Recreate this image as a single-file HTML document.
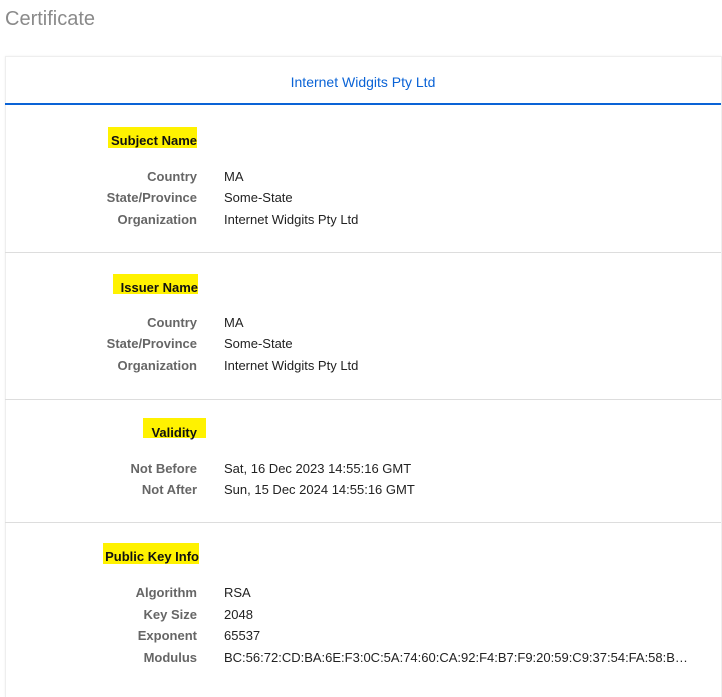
<!DOCTYPE html>
<html><head><style>
body{margin:0;width:722px;height:685px;background:#fff;font-family:"Liberation Sans",sans-serif;position:relative;overflow:hidden;color:#222}
.t{position:absolute;left:5px;top:8px;font-size:20px;font-weight:300;color:#8a8a8a}
.card{position:absolute;left:5px;top:56px;width:715px;height:640px;border:1px solid #eee;border-bottom:none;box-shadow:0 0 3px rgba(0,0,0,.05)}
.tab{position:absolute;left:5px;top:56px;width:716px;height:48px;text-align:center;line-height:52px;color:#0a63d6;font-size:14px}
.bl{position:absolute;left:5px;top:103px;width:716px;height:2px;background:#0a63d6}
.sep{position:absolute;left:5px;width:716px;height:1px;background:#ddd}
.h{position:absolute;background:#fff200;font-weight:bold;font-size:13px;color:#111;line-height:21px;text-align:right;padding-right:0}
.l{position:absolute;right:525px;font-size:13px;font-weight:bold;color:#666;white-space:nowrap}
.v{position:absolute;left:224px;font-size:13px;color:#222;white-space:nowrap}
</style></head><body>
<div class="t">Certificate</div>
<div class="card"></div>
<div class="tab">Internet Widgits Pty Ltd</div>
<div class="bl"></div>

<div class="h" style="left:108px;top:127px;width:89px;height:21px;line-height:28px">Subject Name</div>
<div class="l" style="top:169px">Country</div><div class="v" style="top:169px">MA</div>
<div class="l" style="top:190px">State/Province</div><div class="v" style="top:190px">Some-State</div>
<div class="l" style="top:212px">Organization</div><div class="v" style="top:212px">Internet Widgits Pty Ltd</div>
<div class="sep" style="top:252px"></div>

<div class="h" style="left:113px;top:274px;width:85px;height:20px;line-height:28px">Issuer Name</div>
<div class="l" style="top:315px">Country</div><div class="v" style="top:315px">MA</div>
<div class="l" style="top:336px">State/Province</div><div class="v" style="top:336px">Some-State</div>
<div class="l" style="top:358px">Organization</div><div class="v" style="top:358px">Internet Widgits Pty Ltd</div>
<div class="sep" style="top:399px"></div>

<div class="h" style="left:143px;top:418px;width:54px;padding-right:9px;height:20px;line-height:30px">Validity</div>
<div class="l" style="top:461px">Not Before</div><div class="v" style="top:461px">Sat, 16 Dec 2023 14:55:16 GMT</div>
<div class="l" style="top:482px">Not After</div><div class="v" style="top:482px">Sun, 15 Dec 2024 14:55:16 GMT</div>
<div class="sep" style="top:522px"></div>

<div class="h" style="left:103px;top:543px;width:96px;height:21px;line-height:28px">Public Key Info</div>
<div class="l" style="top:585px">Algorithm</div><div class="v" style="top:585px">RSA</div>
<div class="l" style="top:607px">Key Size</div><div class="v" style="top:607px">2048</div>
<div class="l" style="top:628px">Exponent</div><div class="v" style="top:628px">65537</div>
<div class="l" style="top:650px">Modulus</div><div class="v" style="top:650px">BC:56:72:CD:BA:6E:F3:0C:5A:74:60:CA:92:F4:B7:F9:20:59:C9:37:54:FA:58:B…</div>
</body></html>
